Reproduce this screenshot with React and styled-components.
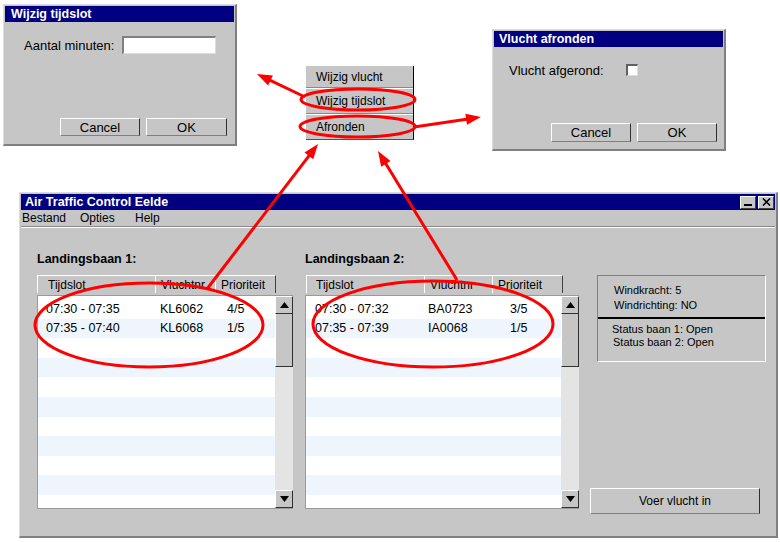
import React from "react";
import styled, { createGlobalStyle } from "styled-components";

const GlobalStyle = createGlobalStyle`
  body {
    margin: 0;
    background: #fff;
    font-family: "Liberation Sans", Arial, sans-serif;
    font-size: 12px;
    color: #000;
  }
`;

const Desktop = styled.div`
  position: relative;
  width: 780px;
  height: 542px;
  overflow: hidden;
  background: #fff;
`;

// windows sit at free positions on the desktop
const Win = styled.div`
  position: absolute;
  left: ${(p) => p.$x}px;
  top: ${(p) => p.$y}px;
  width: ${(p) => p.$w}px;
  height: ${(p) => p.$h}px;
  box-sizing: border-box;
  background: #c6c6c6;
  border-style: solid;
  border-width: 1px 2px 2px 1px;
  border-color: #dcdcdc #808080 #808080 #dcdcdc;
  padding: 1px;
  display: flex;
  flex-direction: column;
`;

const TitleBar = styled.div`
  height: 16px;
  flex-shrink: 0;
  background: #000080;
  color: #fff;
  font-weight: bold;
  font-size: 12.5px;
  display: flex;
  align-items: center;
  justify-content: space-between;
  padding: 0 1px 0 ${(p) => p.$pl || 3}px;
`;

const TitleButtons = styled.div`
  display: flex;
  gap: 2px;
`;

const TitleBtn = styled.div`
  width: 16px;
  height: 13px;
  box-sizing: border-box;
  background: #c6c6c6;
  border-style: solid;
  border-width: 1px;
  border-color: #fff #404040 #404040 #fff;
  display: flex;
  align-items: ${(p) => (p.$bottom ? "flex-end" : "center")};
  justify-content: center;
  padding-bottom: ${(p) => (p.$bottom ? 2 : 0)}px;
`;

const MinBar = styled.div`
  width: 8px;
  height: 2px;
  background: #000;
`;

const DialogBody = styled.div`
  flex: 1;
  display: flex;
  flex-direction: column;
  padding: 14px 0 0 ${(p) => p.$pl}px;
`;

const FieldRow = styled.div`
  display: flex;
  align-items: center;
  height: 18px;
  gap: ${(p) => p.$gap}px;
  font-size: 13px;
`;

const TextInput = styled.div`
  width: 94px;
  height: 18px;
  box-sizing: border-box;
  background: #fff;
  border-style: solid;
  border-width: 2px 1px 1px 2px;
  border-color: #808080 #dcdcdc #dcdcdc #808080;
`;

const CheckBox = styled.div`
  width: 12px;
  height: 12px;
  box-sizing: border-box;
  background: #fff;
  border-style: solid;
  border-width: 2px 1px 1px 2px;
  border-color: #606060 #dcdcdc #dcdcdc #606060;
`;

const ButtonRow = styled.div`
  margin-top: auto;
  display: flex;
  justify-content: flex-end;
  gap: 6px;
  padding: 0 ${(p) => p.$pr}px ${(p) => p.$pb}px 0;
`;

const Button = styled.div`
  width: ${(p) => p.$w}px;
  height: ${(p) => p.$h}px;
  box-sizing: border-box;
  background: #c6c6c6;
  border-style: solid;
  border-width: 1px;
  border-color: #fff #303030 #808080 #fff;
  display: flex;
  align-items: center;
  justify-content: center;
  font-size: ${(p) => p.$fs || 12}px;
`;

const PopupMenu = styled.div`
  position: absolute;
  left: 306px;
  top: 66px;
  width: 108px;
  height: 74px;
  box-sizing: border-box;
  background: #c6c6c6;
  border-right: 1px solid #000;
  border-bottom: 1px solid #505050;
  display: flex;
  flex-direction: column;
`;

const MenuEntry = styled.div`
  height: ${(p) => p.$h}px;
  box-sizing: border-box;
  display: flex;
  align-items: center;
  padding-left: 10px;
  border-top: ${(p) => (p.$sep ? "1px solid #8a8a8a" : "none")};
  box-shadow: ${(p) => (p.$sep ? "inset 0 1px 0 #fff" : "none")};
`;

const MenuBar = styled.div`
  height: 16px;
  flex-shrink: 0;
  display: flex;
  align-items: center;
  padding-left: 1px;
  border-bottom: 1px solid #8a8a8a;
  box-shadow: 0 1px 0 #fff;
`;

const MenuBarItem = styled.div`
  width: ${(p) => p.$w}px;
`;

const MainBody = styled.div`
  flex: 1;
  display: flex;
  align-items: flex-start;
  padding: 24px 0 0 16px;
`;

const Runway = styled.div`
  width: ${(p) => p.$w}px;
  margin-right: ${(p) => p.$mr}px;
  display: flex;
  flex-direction: column;
`;

const RunwayTitle = styled.div`
  height: 16px;
  line-height: 16px;
  font-weight: bold;
  font-size: 12.5px;
  margin-bottom: 8px;
`;

const TableHeader = styled.div`
  align-self: flex-start;
  display: flex;
  height: 18px;
  margin-left: ${(p) => p.$ml}px;
  margin-bottom: 2px;
  box-sizing: border-box;
  border-top: 1px solid #fff;
  border-right: 1px solid #404040;
`;

const HeaderCell = styled.div`
  width: ${(p) => p.$w}px;
  box-sizing: border-box;
  padding-left: ${(p) => p.$p}px;
  border-left: 1px solid #fff;
  display: flex;
  align-items: center;
  white-space: nowrap;
  overflow: hidden;
`;

const ListBox = styled.div`
  height: 214px;
  box-sizing: border-box;
  display: flex;
  background: #fff;
  border-style: solid;
  border-width: 1px 0 1px 1px;
  border-color: #9a9a9a;
`;

const Rows = styled.div`
  flex: 1;
  padding-top: 3px;
  overflow: hidden;
`;

const Row = styled.div`
  height: 19.6px;
  display: flex;
  align-items: center;
  font-size: 12.5px;
  background: ${(p) => (p.$alt ? "#eef5fd" : "#fff")};
`;

const Cell = styled.div`
  width: ${(p) => p.$w}px;
  box-sizing: border-box;
  padding-left: ${(p) => p.$p}px;
  white-space: nowrap;
`;

const ScrollBar = styled.div`
  width: 18px;
  display: flex;
  flex-direction: column;
  background: #e4e4e4;
`;

const ScrollBtn = styled.div`
  height: 18px;
  box-sizing: border-box;
  background: #c6c6c6;
  border-style: solid;
  border-width: 1px;
  border-color: #fff #303030 #303030 #fff;
  display: flex;
  align-items: center;
  justify-content: center;
  margin-top: ${(p) => (p.$end ? "auto" : "0")};
`;

const Thumb = styled.div`
  height: 53px;
  box-sizing: border-box;
  background: #c6c6c6;
  border-style: solid;
  border-width: 0 1px 1px 1px;
  border-color: #fff #303030 #303030 #fff;
`;

const SideColumn = styled.div`
  width: 176px;
  display: flex;
  flex-direction: column;
  padding-top: 24px;
`;

const InfoBox = styled.div`
  margin-left: 7px;
  width: 169px;
  height: 87px;
  box-sizing: border-box;
  border-style: solid;
  border-width: 1px;
  border-color: #808080 #fff #fff #808080;
  font-size: 11px;
  padding-top: 7px;
`;

const InfoLine = styled.div`
  line-height: ${(p) => p.$lh}px;
  padding-left: ${(p) => p.$pl}px;
`;

const InfoDivider = styled.div`
  height: 2px;
  background: #000;
  margin: 4px 0 4px;
`;

const Annotations = styled.svg`
  position: absolute;
  left: 0;
  top: 0;
  pointer-events: none;
`;

const Tri = ({ up }) => (
  <svg width="9" height="6" viewBox="0 0 9 6">
    <polygon points={up ? "4.5,0 9,6 0,6" : "0,0 9,0 4.5,6"} fill="#000" />
  </svg>
);

const runways = [
  {
    title: "Landingsbaan 1:",
    width: 256,
    mr: 12,
    hx: 0,
    hcols: [
      { w: 118, p: 10, t: "Tijdslot" },
      { w: 60, p: 5, t: "Vluchtnr" },
      { w: 60, p: 5, t: "Prioriteit" },
    ],
    rcols: [
      { w: 117, p: 8 },
      { w: 60, p: 5 },
      { w: 60, p: 12 },
    ],
    rows: [
      ["07:30 - 07:35", "KL6062", "4/5"],
      ["07:35 - 07:40", "KL6068", "1/5"],
    ],
  },
  {
    title: "Landingsbaan 2:",
    width: 274,
    mr: 11,
    hx: 1,
    hcols: [
      { w: 118, p: 9, t: "Tijdslot" },
      { w: 68, p: 5, t: "Vluchtnr" },
      { w: 70, p: 5, t: "Prioriteit" },
    ],
    rcols: [
      { w: 118, p: 9 },
      { w: 68, p: 4 },
      { w: 69, p: 18 },
    ],
    rows: [
      ["07:30 - 07:32", "BA0723", "3/5"],
      ["07:35 - 07:39", "IA0068", "1/5"],
    ],
  },
];

const ellipses = [
  { cx: 358, cy: 99.5, rx: 57, ry: 10.5 },
  { cx: 357.5, cy: 126.5, rx: 57.5, ry: 10.5 },
  { cx: 149, cy: 325, rx: 114, ry: 42 },
  { cx: 433, cy: 324, rx: 120, ry: 43 },
];

const arrows = [
  [305, 97, 257, 74],
  [414, 127, 481, 117],
  [207, 289, 318, 144],
  [457, 280, 378, 151],
];

function arrowHead(x1, y1, x2, y2, L = 15, W = 5.5) {
  const dx = x2 - x1;
  const dy = y2 - y1;
  const len = Math.hypot(dx, dy);
  const ux = dx / len;
  const uy = dy / len;
  const bx = x2 - ux * L;
  const by = y2 - uy * L;
  return {
    base: [bx + ux * 2, by + uy * 2],
    points: `${x2},${y2} ${bx - uy * W},${by + ux * W} ${bx + uy * W},${by - ux * W}`,
  };
}

const RunwayTable = ({ rw }) => {
  const rowCount = 11;
  return (
    <Runway $w={rw.width} $mr={rw.mr}>
      <RunwayTitle>{rw.title}</RunwayTitle>
      <TableHeader $ml={rw.hx}>
        {rw.hcols.map((c) => (
          <HeaderCell key={c.t} $w={c.w} $p={c.p}>
            {c.t}
          </HeaderCell>
        ))}
      </TableHeader>
      <ListBox>
        <Rows>
          {Array.from({ length: rowCount }).map((_, i) => (
            <Row key={i} $alt={i % 2 === 1}>
              {rw.rows[i] &&
                rw.rows[i].map((v, j) => (
                  <Cell key={j} $w={rw.rcols[j].w} $p={rw.rcols[j].p}>
                    {v}
                  </Cell>
                ))}
            </Row>
          ))}
        </Rows>
        <ScrollBar>
          <ScrollBtn>
            <Tri up />
          </ScrollBtn>
          <Thumb />
          <ScrollBtn $end>
            <Tri />
          </ScrollBtn>
        </ScrollBar>
      </ListBox>
    </Runway>
  );
};

const App = () => {
  return (
    <Desktop>
      <GlobalStyle />

      <Win $x={3} $y={4} $w={234} $h={142}>
        <TitleBar $pl={6}>Wijzig tijdslot</TitleBar>
        <DialogBody $pl={19}>
          <FieldRow $gap={8}>
            <span>Aantal minuten:</span>
            <TextInput />
          </FieldRow>
          <ButtonRow $pr={7} $pb={7}>
            <Button $w={80} $h={18} $fs={13}>Cancel</Button>
            <Button $w={81} $h={18} $fs={13}>OK</Button>
          </ButtonRow>
        </DialogBody>
      </Win>

      <PopupMenu>
        <MenuEntry $h={21}>Wijzig vlucht</MenuEntry>
        <MenuEntry $h={26} $sep>Wijzig tijdslot</MenuEntry>
        <MenuEntry $h={26} $sep>Afronden</MenuEntry>
      </PopupMenu>

      <Win $x={492} $y={29} $w={234} $h={122}>
        <TitleBar $pl={5}>Vlucht afronden</TitleBar>
        <DialogBody $pl={15}>
          <FieldRow $gap={22}>
            <span>Vlucht afgerond:</span>
            <CheckBox />
          </FieldRow>
          <ButtonRow $pr={6} $pb={6}>
            <Button $w={80} $h={19} $fs={13}>Cancel</Button>
            <Button $w={80} $h={19} $fs={13}>OK</Button>
          </ButtonRow>
        </DialogBody>
      </Win>

      <Win $x={19} $y={192} $w={759} $h={346}>
        <TitleBar $pl={4}>
          <span>Air Traffic Control Eelde</span>
          <TitleButtons>
            <TitleBtn $bottom>
              <MinBar />
            </TitleBtn>
            <TitleBtn>
              <svg width="9" height="8" viewBox="0 0 9 8">
                <path d="M1 0.5 L8 7.5 M8 0.5 L1 7.5" stroke="#000" strokeWidth="1.6" />
              </svg>
            </TitleBtn>
          </TitleButtons>
        </TitleBar>
        <MenuBar>
          <MenuBarItem $w={58}>Bestand</MenuBarItem>
          <MenuBarItem $w={55}>Opties</MenuBarItem>
          <MenuBarItem $w={40}>Help</MenuBarItem>
        </MenuBar>
        <MainBody>
          {runways.map((rw) => (
            <RunwayTable key={rw.title} rw={rw} />
          ))}
          <SideColumn>
            <InfoBox>
              <InfoLine $lh={15} $pl={16}>Windkracht: 5</InfoLine>
              <InfoLine $lh={15} $pl={16}>Windrichting: NO</InfoLine>
              <InfoDivider />
              <InfoLine $lh={13} $pl={14}>Status baan 1: Open</InfoLine>
              <InfoLine $lh={13} $pl={15}>Status baan 2: Open</InfoLine>
            </InfoBox>
            <Button $w={170} $h={26} style={{ marginTop: 126 }}>
              Voer vlucht in
            </Button>
          </SideColumn>
        </MainBody>
      </Win>

      <Annotations width="780" height="542" viewBox="0 0 780 542">
        {ellipses.map((e, i) => (
          <ellipse key={i} cx={e.cx} cy={e.cy} rx={e.rx} ry={e.ry} fill="none" stroke="#f00" strokeWidth="3" />
        ))}
        {arrows.map(([x1, y1, x2, y2], i) => {
          const h = arrowHead(x1, y1, x2, y2);
          return (
            <g key={i}>
              <line x1={x1} y1={y1} x2={h.base[0]} y2={h.base[1]} stroke="#f00" strokeWidth="3" />
              <polygon points={h.points} fill="#f00" />
            </g>
          );
        })}
      </Annotations>
    </Desktop>
  );
};

export default App;
